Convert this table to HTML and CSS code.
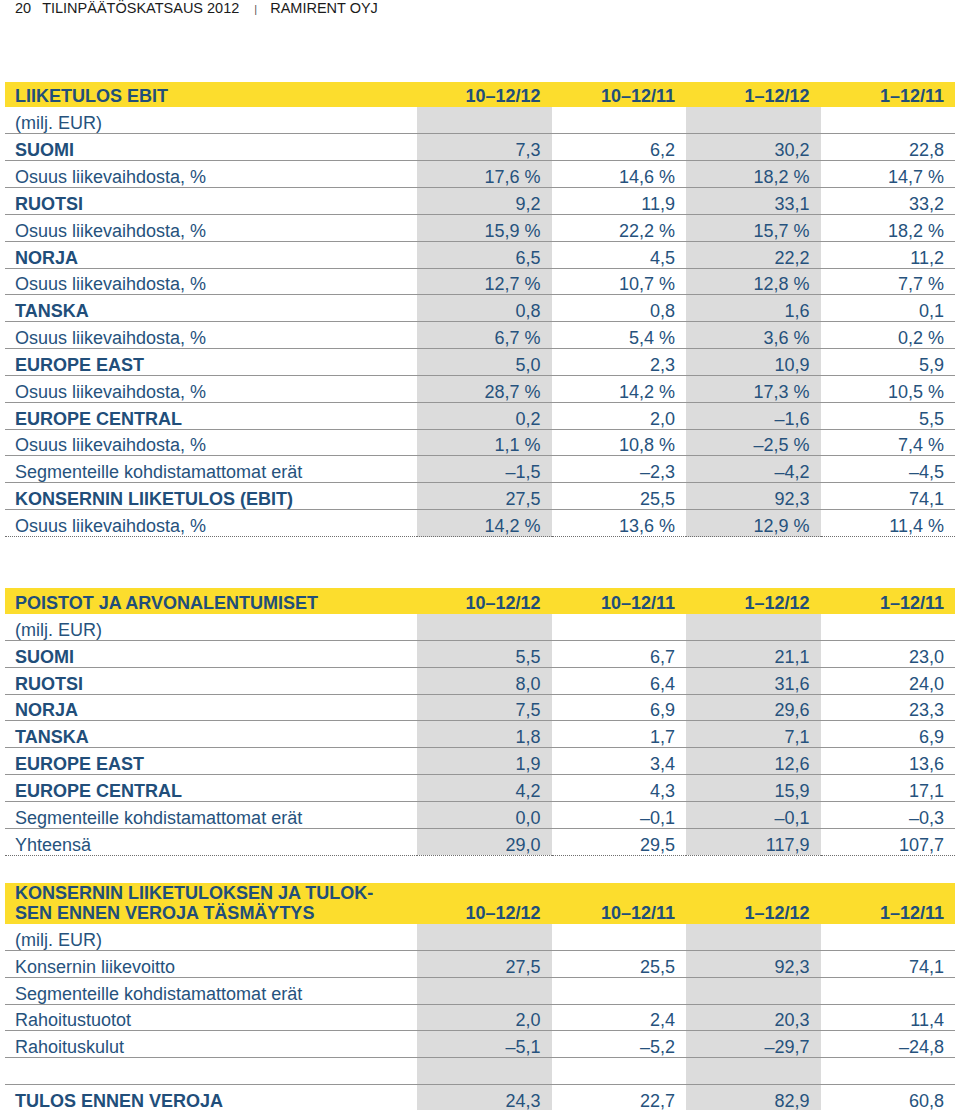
FILE: index.html
```html
<!DOCTYPE html>
<html lang="fi">
<head>
<meta charset="utf-8">
<title>Tilinpäätöskatsaus 2012 – Ramirent Oyj</title>
<link rel="stylesheet" href="styles.css">
</head>
<body>
<header class="page-head">
  <span class="page-num">20</span>
  <span>TILINPÄÄTÖSKATSAUS 2012</span>
  <span class="sep">|</span>
  <span>RAMIRENT OYJ</span>
</header>

<table class="fin t1">
  <colgroup><col class="c-label"><col class="c-num grey"><col class="c-num"><col class="c-num grey"><col class="c-num"></colgroup>
  <thead>
    <tr class="head h1"><th class="label">LIIKETULOS EBIT</th><th>10–12/12</th><th>10–12/11</th><th>1–12/12</th><th>1–12/11</th></tr>
  </thead>
  <tbody>
    <tr><td class="label">(milj. EUR)</td><td></td><td></td><td></td><td></td></tr>
    <tr><td class="label b">SUOMI</td><td>7,3</td><td>6,2</td><td>30,2</td><td>22,8</td></tr>
    <tr><td class="label">Osuus liikevaihdosta, %</td><td>17,6 %</td><td>14,6 %</td><td>18,2 %</td><td>14,7 %</td></tr>
    <tr><td class="label b">RUOTSI</td><td>9,2</td><td>11,9</td><td>33,1</td><td>33,2</td></tr>
    <tr><td class="label">Osuus liikevaihdosta, %</td><td>15,9 %</td><td>22,2 %</td><td>15,7 %</td><td>18,2 %</td></tr>
    <tr><td class="label b">NORJA</td><td>6,5</td><td>4,5</td><td>22,2</td><td>11,2</td></tr>
    <tr><td class="label">Osuus liikevaihdosta, %</td><td>12,7 %</td><td>10,7 %</td><td>12,8 %</td><td>7,7 %</td></tr>
    <tr><td class="label b">TANSKA</td><td>0,8</td><td>0,8</td><td>1,6</td><td>0,1</td></tr>
    <tr><td class="label">Osuus liikevaihdosta, %</td><td>6,7 %</td><td>5,4 %</td><td>3,6 %</td><td>0,2 %</td></tr>
    <tr><td class="label b">EUROPE EAST</td><td>5,0</td><td>2,3</td><td>10,9</td><td>5,9</td></tr>
    <tr><td class="label">Osuus liikevaihdosta, %</td><td>28,7 %</td><td>14,2 %</td><td>17,3 %</td><td>10,5 %</td></tr>
    <tr><td class="label b">EUROPE CENTRAL</td><td>0,2</td><td>2,0</td><td>–1,6</td><td>5,5</td></tr>
    <tr><td class="label">Osuus liikevaihdosta, %</td><td>1,1 %</td><td>10,8 %</td><td>–2,5 %</td><td>7,4 %</td></tr>
    <tr><td class="label">Segmenteille kohdistamattomat erät</td><td>–1,5</td><td>–2,3</td><td>–4,2</td><td>–4,5</td></tr>
    <tr><td class="label b">KONSERNIN LIIKETULOS (EBIT)</td><td>27,5</td><td>25,5</td><td>92,3</td><td>74,1</td></tr>
    <tr class="last"><td class="label">Osuus liikevaihdosta, %</td><td>14,2 %</td><td>13,6 %</td><td>12,9 %</td><td>11,4 %</td></tr>
  </tbody>
</table>

<table class="fin t2">
  <colgroup><col class="c-label"><col class="c-num grey"><col class="c-num"><col class="c-num grey"><col class="c-num"></colgroup>
  <thead>
    <tr class="head h2"><th class="label">POISTOT JA ARVONALENTUMISET</th><th>10–12/12</th><th>10–12/11</th><th>1–12/12</th><th>1–12/11</th></tr>
  </thead>
  <tbody>
    <tr><td class="label">(milj. EUR)</td><td></td><td></td><td></td><td></td></tr>
    <tr><td class="label b">SUOMI</td><td>5,5</td><td>6,7</td><td>21,1</td><td>23,0</td></tr>
    <tr><td class="label b">RUOTSI</td><td>8,0</td><td>6,4</td><td>31,6</td><td>24,0</td></tr>
    <tr><td class="label b">NORJA</td><td>7,5</td><td>6,9</td><td>29,6</td><td>23,3</td></tr>
    <tr><td class="label b">TANSKA</td><td>1,8</td><td>1,7</td><td>7,1</td><td>6,9</td></tr>
    <tr><td class="label b">EUROPE EAST</td><td>1,9</td><td>3,4</td><td>12,6</td><td>13,6</td></tr>
    <tr><td class="label b">EUROPE CENTRAL</td><td>4,2</td><td>4,3</td><td>15,9</td><td>17,1</td></tr>
    <tr><td class="label">Segmenteille kohdistamattomat erät</td><td>0,0</td><td>–0,1</td><td>–0,1</td><td>–0,3</td></tr>
    <tr class="last"><td class="label">Yhteensä</td><td>29,0</td><td>29,5</td><td>117,9</td><td>107,7</td></tr>
  </tbody>
</table>

<table class="fin t3">
  <colgroup><col class="c-label"><col class="c-num grey"><col class="c-num"><col class="c-num grey"><col class="c-num"></colgroup>
  <thead>
    <tr class="head h3"><th class="label">KONSERNIN LIIKETULOKSEN JA TULOK-<br>SEN ENNEN VEROJA TÄSMÄYTYS</th><th>10–12/12</th><th>10–12/11</th><th>1–12/12</th><th>1–12/11</th></tr>
  </thead>
  <tbody>
    <tr><td class="label">(milj. EUR)</td><td></td><td></td><td></td><td></td></tr>
    <tr><td class="label">Konsernin liikevoitto</td><td>27,5</td><td>25,5</td><td>92,3</td><td>74,1</td></tr>
    <tr><td class="label">Segmenteille kohdistamattomat erät</td><td></td><td></td><td></td><td></td></tr>
    <tr><td class="label">Rahoitustuotot</td><td>2,0</td><td>2,4</td><td>20,3</td><td>11,4</td></tr>
    <tr><td class="label">Rahoituskulut</td><td>–5,1</td><td>–5,2</td><td>–29,7</td><td>–24,8</td></tr>
    <tr><td class="label"></td><td></td><td></td><td></td><td></td></tr>
    <tr class="last"><td class="label b">TULOS ENNEN VEROJA</td><td>24,3</td><td>22,7</td><td>82,9</td><td>60,8</td></tr>
  </tbody>
</table>
</body>
</html>
```

FILE: styles.css
```css
html, body {
  margin: 0;
  padding: 0;
  background: #ffffff;
}

body {
  font-family: "Liberation Sans", Arial, Helvetica, sans-serif;
  color: #26527d;
}

.page-head {
  display: flex;
  align-items: baseline;
  height: 17px;
  padding-left: 15px;
  font-size: 14.5px;
  line-height: 17px;
  color: #1b1b1b;
}

.page-head .page-num {
  margin-right: 11px;
}

.page-head .sep {
  margin: 0 13px 0 15px;
  color: #555555;
  font-size: 11px;
}

.fin {
  margin-left: 5px;
  width: 950px;
  table-layout: fixed;
  border-collapse: collapse;
  border-spacing: 0;
  font-size: 18px;
  line-height: 20px;
}

.t1 { margin-top: 65px; }
.t2 { margin-top: 51px; }
.t3 { margin-top: 27px; }

.c-label { width: 412px; }
.c-num { width: 134.5px; }
.grey { background: #dcdcdc; }

.fin th,
.fin td {
  padding: 0 11px 0 0;
  text-align: right;
  vertical-align: bottom;
  white-space: nowrap;
}

.fin td {
  border-bottom: 1px solid #959595;
  font-weight: normal;
}

.fin tbody tr {
  height: 26.85px;
}

.fin tr.last td {
  border-bottom: 1px dotted #6f6f6f;
}

.fin .label {
  padding-left: 10px;
  text-align: left;
}

.fin .b {
  font-weight: bold;
  color: #214e7a;
}

.head {
  background: #fcdd2d;
  color: #214e7a;
}

.head th {
  font-weight: bold;
  padding-bottom: 1px;
  line-height: 19px;
}

.h1 { height: 25px; }
.h2 { height: 25.5px; }
.h3 { height: 41px; }

.h3 th.label {
  line-height: 20.5px;
  padding-bottom: 0;
}
```
